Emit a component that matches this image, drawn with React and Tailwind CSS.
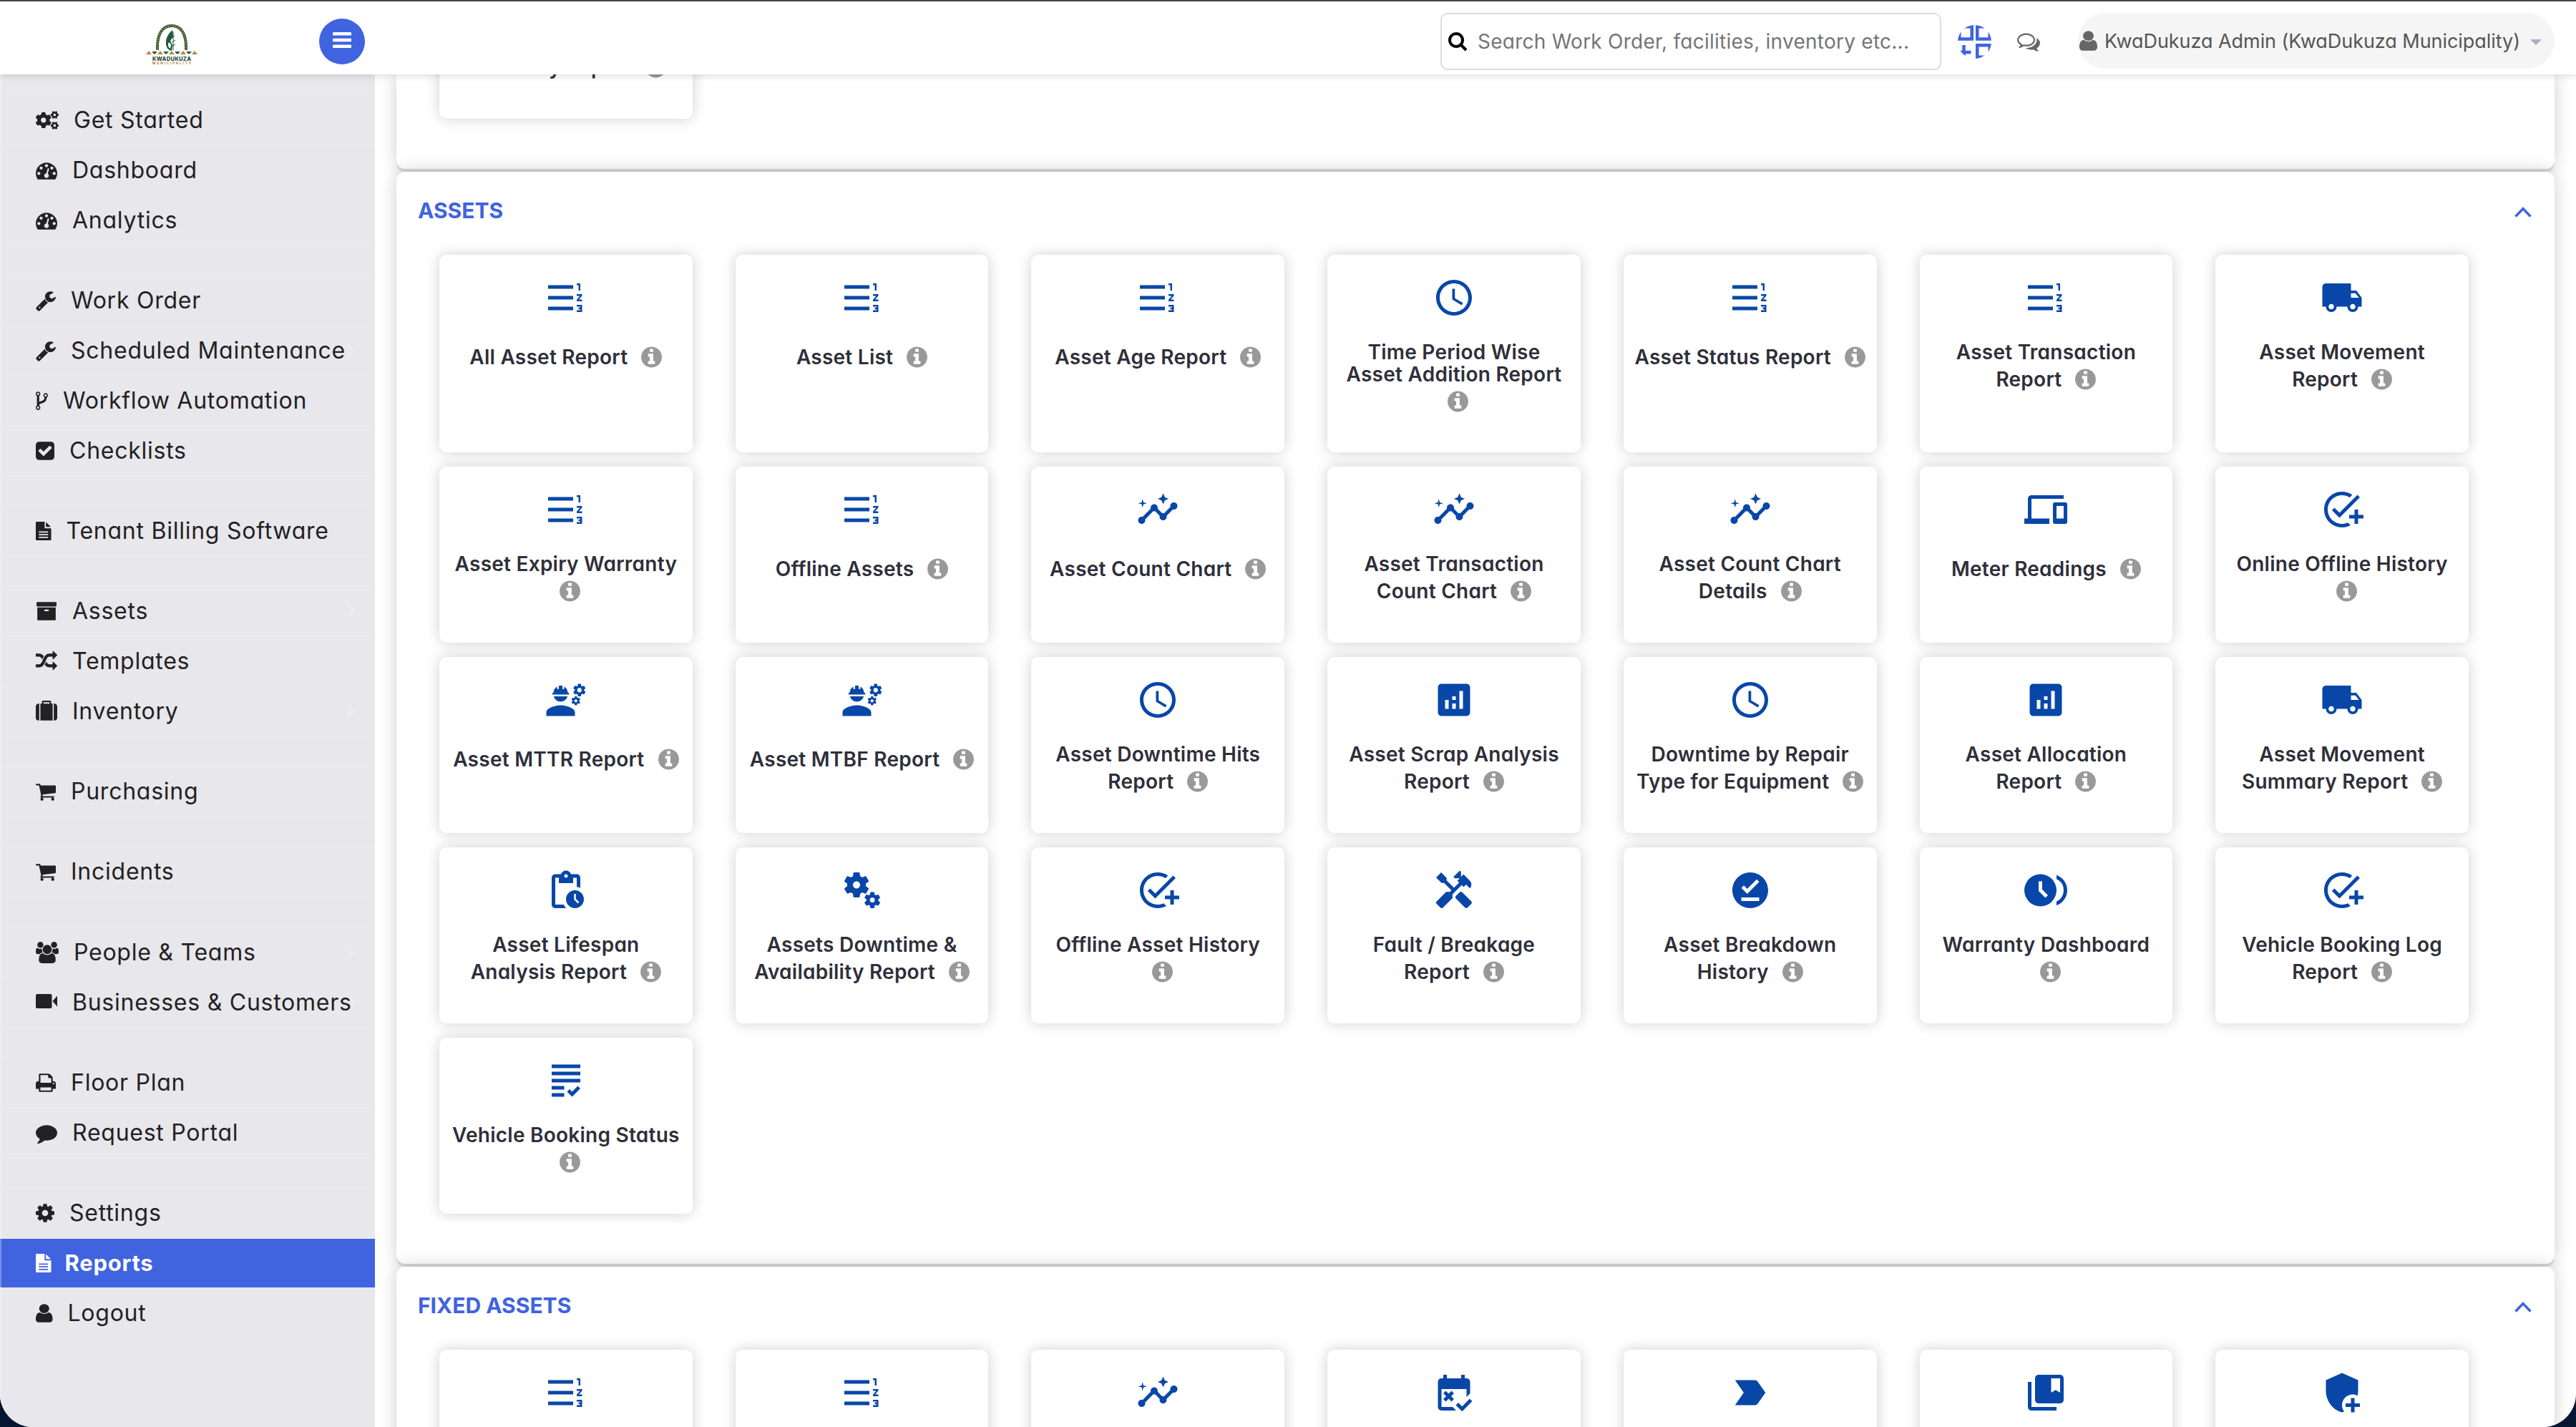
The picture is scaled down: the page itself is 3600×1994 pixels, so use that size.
import { Fragment } from 'react';
import { FaCogs } from 'react-icons/fa';
import {
    MdAccessTime,
    MdAddModerator,
    MdAddTask,
    MdAnalytics,
    MdBrowseGallery,
    MdCollectionsBookmark,
    MdDevices,
    MdEngineering,
    MdFormatListNumberedRtl,
    MdFreeCancellation,
    MdGrading,
    MdHandyman,
    MdInsights,
    MdLabelImportant,
    MdLocalShipping,
    MdMiscellaneousServices,
    MdOfflinePin,
    MdPendingActions,
} from 'react-icons/md';

// glyphs drawn on a 1792 unit grid, adv is the glyph's own width
const GLYPHS = {
    dashboard: { adv: 1792, d: 'M384 1152q0-53-37.5-90.5t-90.5-37.5-90.5 37.5-37.5 90.5 37.5 90.5 90.5 37.5 90.5-37.5 37.5-90.5zm192-448q0-53-37.5-90.5t-90.5-37.5-90.5 37.5-37.5 90.5 37.5 90.5 90.5 37.5 90.5-37.5 37.5-90.5zm428 481l101-382q6-26-7.5-48.5t-38.5-29.5-48 6.5-30 39.5l-101 382q-60 5-107 43.5t-63 98.5q-20 77 20 146t117 89 146-20 89-117q16-60-6-117t-72-91zm660-33q0-53-37.5-90.5t-90.5-37.5-90.5 37.5-37.5 90.5 37.5 90.5 90.5 37.5 90.5-37.5 37.5-90.5zm-640-640q0-53-37.5-90.5t-90.5-37.5-90.5 37.5-37.5 90.5 37.5 90.5 90.5 37.5 90.5-37.5 37.5-90.5zm448 192q0-53-37.5-90.5t-90.5-37.5-90.5 37.5-37.5 90.5 37.5 90.5 90.5 37.5 90.5-37.5 37.5-90.5zm320 448q0 261-141 483-19 29-54 29h-1402q-35 0-54-29-141-221-141-483 0-182 71-348t191-286 286-191 348-71 348 71 286 191 191 286 71 348z' },
    wrench: { adv: 1664, d: 'M448 1472q0-26-19-45t-45-19-45 19-19 45 19 45 45 19 45-19 19-45zm644-420l-682 682q-37 37-90 37-52 0-91-37l-106-108q-38-36-38-90 0-53 38-91l681-681q39 98 114.5 173.5t173.5 114.5zm634-435q0 39-23 106-47 134-164.5 217.5t-258.5 83.5q-185 0-316.5-131.5t-131.5-316.5 131.5-316.5 316.5-131.5q58 0 121.5 16.5t107.5 46.5q16 11 16 28t-16 28l-293 169v224l193 107q5-3 79-48.5t135.5-81 70.5-35.5q15 0 23.5 10t8.5 25z' },
    fork: { adv: 1024, d: 'M672 1472q0-40-28-68t-68-28-68 28-28 68 28 68 68 28 68-28 28-68zm0-1152q0-40-28-68t-68-28-68 28-28 68 28 68 68 28 68-28 28-68zm640 128q0-40-28-68t-68-28-68 28-28 68 28 68 68 28 68-28 28-68zm96 0q0 52-26 96.5t-70 69.5q-2 287-226 414-67 38-203 81-128 40-169.5 71t-41.5 100v26q44 25 70 69.5t26 96.5q0 80-56 136t-136 56-136-56-56-136q0-52 26-96.5t70-69.5v-820q-44-25-70-69.5t-26-96.5q0-80 56-136t136-56 136 56 56 136q0 52-26 96.5t-70 69.5v497q54-26 154-57 55-17 87.5-29.5t70.5-31 59-39.5 40.5-51 28-69.5 8.5-91.5q-44-25-70-69.5t-26-96.5q0-80 56-136t136-56 136 56 56 136z' },
    check: { adv: 1536, d: 'M813 1299l614-614q19-19 19-45t-19-45l-102-102q-19-19-45-19t-45 19l-467 467-211-211q-19-19-45-19t-45 19l-102 102q-19 19-19 45t19 45l358 358q19 19 45 19t45-19zm851-883v960q0 119-84.5 203.5t-203.5 84.5h-960q-119 0-203.5-84.5t-84.5-203.5v-960q0-119 84.5-203.5t203.5-84.5h960q119 0 203.5 84.5t84.5 203.5z' },
    archive: { adv: 1792, d: 'M1088 832q0-26-19-45t-45-19h-256q-26 0-45 19t-19 45 19 45 45 19h256q26 0 45-19t19-45zm576-192v960q0 26-19 45t-45 19h-1408q-26 0-45-19t-19-45v-960q0-26 19-45t45-19h1408q26 0 45 19t19 45zm64-448v256q0 26-19 45t-45 19h-1536q-26 0-45-19t-19-45v-256q0-26 19-45t45-19h1536q26 0 45 19t19 45z' },
    random: { adv: 1792, d: 'M666 481q-60 92-137 273-22-45-37-72.5t-40.5-63.5-51-56.5-63-35-81.5-14.5h-224q-14 0-23-9t-9-23v-192q0-14 9-23t23-9h224q250 0 410 225zm1126 799q0 14-9 23l-320 320q-9 9-23 9-13 0-22.5-9.5t-9.5-22.5v-192q-32 0-85 .5t-81 1-73-1-71-5-64-10.5-63-18.5-58-28.5-59-40-55-53.5-56-69.5q59-93 136-273 22 45 37 72.5t40.5 63.5 51 56.5 63 35 81.5 14.5h256v-192q0-14 9-23t23-9q12 0 24 10l319 319q9 9 9 23zm0-896q0 14-9 23l-320 320q-9 9-23 9-13 0-22.5-9.5t-9.5-22.5v-192h-256q-48 0-87 15t-69 45-51 61.5-45 77.5q-32 62-78 171-29 66-49.5 111t-54 105-64 100-74 83-90 68.5-106.5 42-128 16.5h-224q-14 0-23-9t-9-23v-192q0-14 9-23t23-9h224q48 0 87-15t69-45 51-61.5 45-77.5q32-62 78-171 29-66 49.5-111t54-105 64-100 74-83 90-68.5 106.5-42 128-16.5h256v-192q0-14 9-23t23-9q12 0 24 10l319 319q9 9 9 23z' },
    suitcase: { adv: 1792, d: 'M640 256h512v-128h-512v128zm-352 0v1408h-64q-92 0-158-66t-66-158v-960q0-92 66-158t158-66h64zm1120 0v1408h-1024v-1408h128v-160q0-40 28-68t68-28h576q40 0 68 28t28 68v160h128zm384 224v960q0 92-66 158t-158 66h-64v-1408h64q92 0 158 66t66 158z' },
    cart: { adv: 1664, d: 'M704 1536q0 52-38 90t-90 38-90-38-38-90 38-90 90-38 90 38 38 90zm896 0q0 52-38 90t-90 38-90-38-38-90 38-90 90-38 90 38 38 90zm128-1088v512q0 24-16.5 42.5t-40.5 21.5l-1044 122q13 60 13 70 0 16-24 64h920q26 0 45 19t19 45-19 45-45 19h-1024q-26 0-45-19t-19-45q0-11 8-31.5t16-36 21.5-40 15.5-29.5l-177-823h-204q-26 0-45-19t-19-45 19-45 45-19h256q16 0 28.5 6.5t19.5 15.5 13 24.5 8 26 5.5 29.5 4.5 26h1201q26 0 45 19t19 45z' },
    users: { adv: 1920, d: 'M529 896q-162 5-265 128h-134q-82 0-138-40.5t-56-118.5q0-353 124-353 6 0 43.5 21t97.5 42.5 119 21.5q67 0 133-23-5 37-5 66 0 139 81 256zm1071 637q0 120-73 189.5t-194 69.5h-874q-121 0-194-69.5t-73-189.5q0-53 3.5-103.5t14-109 26.5-108.5 43-97.5 62-81 85.5-53.5 111.5-20q10 0 43 21.5t73 48 107 48 135 21.5 135-21.5 107-48 73-48 43-21.5q61 0 111.5 20t85.5 53.5 62 81 43 97.5 26.5 108.5 14 109 3.5 103.5zm-1024-1277q0 106-75 181t-181 75-181-75-75-181 75-181 181-75 181 75 75 181zm704 384q0 159-112.5 271.5t-271.5 112.5-271.5-112.5-112.5-271.5 112.5-271.5 271.5-112.5 271.5 112.5 112.5 271.5zm576 225q0 78-56 118.5t-138 40.5h-134q-103-123-265-128 81-117 81-256 0-29-5-66 66 23 133 23 59 0 119-21.5t97.5-42.5 43.5-21q124 0 124 353zm-128-609q0 106-75 181t-181 75-181-75-75-181 75-181 181-75 181 75 75 181z' },
    print: { adv: 1664, d: 'M448 1536h896v-256h-896v256zm0-640h896v-384h-160q-40 0-68-28t-28-68v-160h-640v640zm1152 64q0-26-19-45t-45-19-45 19-19 45 19 45 45 19 45-19 19-45zm128 0v416q0 13-9.5 22.5t-22.5 9.5h-224v160q0 40-28 68t-68 28h-960q-40 0-68-28t-28-68v-160h-224q-13 0-22.5-9.5t-9.5-22.5v-416q0-79 56.5-135.5t135.5-56.5h64v-544q0-40 28-68t68-28h672q40 0 88 20t76 48l152 152q28 28 48 76t20 88v256h64q79 0 135.5 56.5t56.5 135.5z' },
    comment: { adv: 1792, d: 'M1792 896q0 174-120 321.5t-326 233-450 85.5q-70 0-145-8-198 175-460 242-49 14-114 22-17 2-30.5-9t-17.5-29v-1q-3-4-.5-12t2-10 4.5-9.5l6-9 7-8.5 8-9q7-8 31-34.5t34.5-38 31-39.5 32.5-51 27-59 26-76q-157-89-247.5-220t-90.5-281q0-130 71-248.5t191-204.5 286-136.5 348-50.5q244 0 450 85.5t326 233 120 321.5z' },
    cog: { adv: 1536, d: 'M1152 896q0-106-75-181t-181-75-181 75-75 181 75 181 181 75 181-75 75-181zm512-109v222q0 12-8 23t-20 13l-185 28q-19 54-39 91 35 50 107 138 10 12 10 25t-9 23q-27 37-99 108t-94 71q-12 0-26-9l-138-108q-44 23-91 38-16 136-29 186-7 28-36 28h-222q-14 0-24.5-8.5t-11.5-21.5l-28-184q-49-16-90-37l-141 107q-10 9-25 9-14 0-25-11-126-114-165-168-7-10-7-23 0-12 8-23 15-21 51-66.5t54-70.5q-27-50-41-99l-183-27q-13-2-21-12.5t-8-23.5v-222q0-12 8-23t19-13l186-28q14-46 39-92-40-57-107-138-10-12-10-24 0-10 9-23 26-36 98.5-107.5t94.5-71.5q13 0 26 10l138 107q44-23 91-38 16-136 29-186 7-28 36-28h222q14 0 24.5 8.5t11.5 21.5l28 184q49 16 90 37l142-107q9-9 24-9 13 0 25 10 129 119 165 170 7 8 7 22 0 12-8 23-15 21-51 66.5t-54 70.5q26 50 41 98l183 28q13 2 21 12.5t8 23.5z' },
    user: { adv: 1280, d: 'M1536 1399q0 109-62.5 187t-150.5 78h-854q-88 0-150.5-78t-62.5-187q0-85 8.5-160.5t31.5-152 58.5-131 94-89 134.5-34.5q131 128 313 128t313-128q76 0 134.5 34.5t94 89 58.5 131 31.5 152 8.5 160.5zm-256-887q0 159-112.5 271.5t-271.5 112.5-271.5-112.5-112.5-271.5 112.5-271.5 271.5-112.5 271.5 112.5 112.5 271.5z' },
    info: { adv: 1536, d: 'M1152 1376v-160q0-14-9-23t-23-9h-96v-512q0-14-9-23t-23-9h-320q-14 0-23 9t-9 23v160q0 14 9 23t23 9h96v320h-96q-14 0-23 9t-9 23v160q0 14 9 23t23 9h448q14 0 23-9t9-23zm-128-896v-160q0-14-9-23t-23-9h-192q-14 0-23 9t-9 23v160q0 14 9 23t23 9h192q14 0 23-9t9-23zm640 416q0 209-103 385.5t-279.5 279.5-385.5 103-385.5-103-279.5-279.5-103-385.5 103-385.5 279.5-279.5 385.5-103 385.5 103 279.5 279.5 103 385.5z' },
    comments: { adv: 1792, d: 'M704 384q-153 0-286 52t-211.5 141-78.5 191q0 82 53 158t149 132l97 56-35 84q34-20 62-39l44-31 53 10q78 14 153 14 153 0 286-52t211.5-141 78.5-191-78.5-191-211.5-141-286-52zm0-128q191 0 353.5 68.5t256.5 186.5 94 257-94 257-256.5 186.5-353.5 68.5q-86 0-176-16-124 88-278 128-36 9-86 16h-3q-11 0-20.5-8t-11.5-21q-1-3-1-6.5t.5-6.5 2-6l2.5-5 3.5-5.5 4-5 4.5-5 4-4.5q5-6 23-25t26-29.5 22.5-29 25-38.5 20.5-44q-124-72-195-177t-71-224q0-139 94-257t256.5-186.5 353.5-68.5zm822 1169q10 24 20.5 44t25 38.5 22.5 29 26 29.5 23 25q1 1 4 4.5t4.5 5 4 5 3.5 5.5l2.5 5 2 6 .5 6.5-1 6.5q-3 14-13 22t-22 7q-50-7-86-16-154-40-278-128-90 16-176 16-271 0-472-132 58 4 88 4 161 0 309-45t264-129q125-92 192-212t67-254q0-77-23-152 129 71 204 178t75 230q0 120-71 224.5t-195 176.5z' },
};

function Glyph({ name, className }) {
    const { adv, d } = GLYPHS[name];
    return (
        <svg className={className} viewBox={`${(1792 - adv) / 2} 0 ${adv} 1792`} preserveAspectRatio="none" fill="currentColor">
            <path d={d} />
        </svg>
    );
}

function FileIcon() {
    return (
        <svg className="w-[21.5px] h-[26px]" viewBox="0 0 1280 1536" fill="currentColor">
            <path fillRule="evenodd" d="M1244 428q-8-16-22-30L882 58q-14-14-34-24v394zM736 0H72Q0 0 0 72v1392q0 72 72 72h1136q72 0 72-72V544H800q-64 0-64-64zM256 896h768v-96H256zm0 224h768v-96H256zm0 224h768v-96H256z" />
        </svg>
    );
}

function VideoIcon() {
    return (
        <svg className="w-[30px] h-[20px] mb-1" viewBox="0 0 30 20" fill="currentColor">
            <rect width="22.5" height="20" rx="2" />
            <path d="M23.5 10 30 2.5v15z" />
        </svg>
    );
}

const MENU = [
    [
        { label: 'Get Started', icon: <FaCogs className="w-8 h-[26px]" /> },
        { label: 'Dashboard', icon: <Glyph name="dashboard" className="w-[30px] h-[30px]" /> },
        { label: 'Analytics', icon: <Glyph name="dashboard" className="w-[30px] h-[30px]" /> },
    ],
    [
        { label: 'Work Order', icon: <Glyph name="wrench" className="w-7 h-[30px]" /> },
        { label: 'Scheduled Maintenance', icon: <Glyph name="wrench" className="w-7 h-[30px]" />, sub: true },
        { label: 'Workflow Automation', icon: <Glyph name="fork" className="w-[17px] h-[30px]" /> },
        { label: 'Checklists', icon: <Glyph name="check" className="w-[26px] h-[30px]" /> },
    ],
    [{ label: 'Tenant Billing Software', icon: <FileIcon /> }],
    [
        { label: 'Assets', icon: <Glyph name="archive" className="w-[30px] h-[30px]" />, sub: true },
        { label: 'Templates', icon: <Glyph name="random" className="w-[30px] h-[30px]" /> },
        { label: 'Inventory', icon: <Glyph name="suitcase" className="w-[30px] h-[30px]" />, sub: true },
    ],
    [{ label: 'Purchasing', icon: <Glyph name="cart" className="w-7 h-[30px]" /> }],
    [{ label: 'Incidents', icon: <Glyph name="cart" className="w-7 h-[30px]" /> }],
    [
        { label: 'People & Teams', icon: <Glyph name="users" className="w-8 h-[30px]" />, sub: true },
        { label: 'Businesses & Customers', icon: <VideoIcon />, sub: true },
    ],
    [
        { label: 'Floor Plan', icon: <Glyph name="print" className="w-7 h-[30px]" /> },
        { label: 'Request Portal', icon: <Glyph name="comment" className="w-[30px] h-[30px]" /> },
    ],
    [
        { label: 'Settings', icon: <Glyph name="cog" className="w-[26px] h-[30px]" /> },
        { label: 'Reports', icon: <FileIcon />, active: true },
        { label: 'Logout', icon: <Glyph name="user" className="w-[23.5px] h-[30px]" /> },
    ],
];

// the info badge sits on the last line; an empty string puts it on its own
const ASSETS = [
    [MdFormatListNumberedRtl, ['All Asset Report']],
    [MdFormatListNumberedRtl, ['Asset List']],
    [MdFormatListNumberedRtl, ['Asset Age Report']],
    [MdAccessTime, ['Time Period Wise', 'Asset Addition Report', '']],
    [MdFormatListNumberedRtl, ['Asset Status Report']],
    [MdFormatListNumberedRtl, ['Asset Transaction', 'Report']],
    [MdLocalShipping, ['Asset Movement', 'Report']],
    [MdFormatListNumberedRtl, ['Asset Expiry Warranty', '']],
    [MdFormatListNumberedRtl, ['Offline Assets']],
    [MdInsights, ['Asset Count Chart']],
    [MdInsights, ['Asset Transaction', 'Count Chart']],
    [MdInsights, ['Asset Count Chart', 'Details']],
    [MdDevices, ['Meter Readings']],
    [MdAddTask, ['Online Offline History', '']],
    [MdEngineering, ['Asset MTTR Report']],
    [MdEngineering, ['Asset MTBF Report']],
    [MdAccessTime, ['Asset Downtime Hits', 'Report']],
    [MdAnalytics, ['Asset Scrap Analysis', 'Report']],
    [MdAccessTime, ['Downtime by Repair', 'Type for Equipment']],
    [MdAnalytics, ['Asset Allocation', 'Report']],
    [MdLocalShipping, ['Asset Movement', 'Summary Report']],
    [MdPendingActions, ['Asset Lifespan', 'Analysis Report']],
    [MdMiscellaneousServices, ['Assets Downtime &', 'Availability Report']],
    [MdAddTask, ['Offline Asset History', '']],
    [MdHandyman, ['Fault / Breakage', 'Report']],
    [MdOfflinePin, ['Asset Breakdown', 'History']],
    [MdBrowseGallery, ['Warranty Dashboard', '']],
    [MdAddTask, ['Vehicle Booking Log', 'Report']],
    [MdGrading, ['Vehicle Booking Status', '']],
];

const FIXED_ASSETS = [
    MdFormatListNumberedRtl,
    MdFormatListNumberedRtl,
    MdInsights,
    MdFreeCancellation,
    MdLabelImportant,
    MdCollectionsBookmark,
    MdAddModerator,
].map((Icon) => [Icon, null]);

function ReportCard({ icon: Icon, lines }) {
    return (
        <div className="flex flex-col items-center min-h-[246px] pt-[30px] pb-[50px] rounded-[10px] bg-white shadow-[0_0_20px_rgba(0,0,0,0.19)]">
            <Icon className="w-[60px] h-[60px] shrink-0 text-[#0847a8]" />
            {lines && (
                <div className="mt-[31px] font-semibold text-[28px] text-[#2f2f3a] tracking-[0.25px] whitespace-nowrap">
                    {lines.map((line, i) =>
                        i === lines.length - 1 ? (
                            <div key={i} className="flex items-center justify-center h-[43px]">
                                {line && <span className="mr-[7px]">{line}</span>}
                                <Glyph name="info" className="w-[29px] h-[34px] ml-3 text-[#999999]" />
                            </div>
                        ) : (
                            <div key={i} className="h-[31px] text-center leading-[31px]">{line}</div>
                        )
                    )}
                </div>
            )}
        </div>
    );
}

function Panel({ title, reports, className }) {
    return (
        <section className={`rounded-xl bg-white shadow-[0_4px_0_#d8d8d8,0_0_24px_rgba(0,0,0,0.2)] ${className}`}>
            <div className="flex items-center justify-between h-[116px] pl-[30px] pr-8 pb-2">
                <h2 className="font-bold text-[30px] leading-none text-[#4063e0]">{title}</h2>
                <svg className="w-6 h-4 mt-1" viewBox="0 0 24 16" fill="none" stroke="#4063e0" strokeWidth="3.5">
                    <path d="M1.500 14.500 12 3.500l10.500 11" />
                </svg>
            </div>
            <div className="grid grid-cols-7 gap-x-[60px] gap-y-5 pl-[60px] pr-[120px]">
                {reports.map(([icon, lines], i) => (
                    <ReportCard key={i} icon={icon} lines={lines} />
                ))}
            </div>
        </section>
    );
}

function Logo() {
    return (
        <svg className="w-[72px] h-[56px] overflow-visible" viewBox="0 0 72 56">
            <path d="M16 36C15 12 24 2 36 2s21 10 20 34" fill="none" stroke="#1f5a3c" strokeWidth="4" />
            <path d="M16 36C15 12 24 2 36 2s21 10 20 34" fill="none" stroke="#b07a3c" strokeWidth="2.4" strokeDasharray="2 1.5" />
            <path d="M37 8c-6 5-10 12-9 20 1 5 3 8 8 9l1-8-3-6 4-6z" fill="#1f5a3c" />
            <path d="M38 10v26M40 16l-3 3M41 22l-4 3M41 28l-4 2" stroke="#1f5a3c" strokeWidth="1" />
            <path d="M32 25c-2 3-1 7 2 9l1-6z" fill="#ffffff" />
            <path d="M0 42l4-5 4 5zM16 42l4-5 4 5zM32 42l4-5 4 5zM48 42l4-5 4 5zM64 42l4-5 4 5z" fill="#b98645" />
            <path d="M8 38l4 4 4-4zM24 38l4 4 4-4zM40 38l4 4 4-4zM56 38l4 4 4-4z" fill="#1f5a3c" />
            <text x="36" y="50.5" textAnchor="middle" textLength="54" fontSize="7.5" fontWeight="800" fill="#1f4a35" fontFamily="Inter, sans-serif">KWADUKUZA</text>
            <text x="36" y="56" textAnchor="middle" textLength="54" fontSize="4.5" fontWeight="700" fill="#b07a3c" fontFamily="Inter, sans-serif">MUNICIPALITY</text>
        </svg>
    );
}

function AppsIcon() {
    return (
        <svg className="w-[47px] h-[47px]" viewBox="0 0 47 47" fill="none" stroke="#4063e0" strokeWidth="4.5">
            <clipPath id="apps-round">
                <circle cx="23.5" cy="23.5" r="23.5" />
            </clipPath>
            <g clipPath="url(#apps-round)">
                <rect x="2.25" y="2.25" width="17.5" height="17.25" />
                <rect x="27.25" y="2.25" width="17.5" height="17.25" />
                <rect x="27.25" y="28.25" width="17.5" height="16.5" />
                <path d="M0 38h18.500M8.500 28v19" />
            </g>
        </svg>
    );
}

function Header() {
    return (
        <header className="relative z-10 flex items-center h-[104px] pt-2.5 pr-[30px] border-t-2 border-[#474546] bg-white shadow-[0_2px_10px_rgba(0,0,0,0.14)]">
            <div className="flex items-center w-[524px] pl-[204px]">
                <div className="mt-2"><Logo /></div>
                <button className="flex items-center justify-center w-16 h-16 ml-[170px] pb-1 rounded-full bg-[#4063e0]">
                    <svg className="w-[26px] h-[22px]" viewBox="0 0 26 22" fill="#ffffff">
                        <rect width="26" height="4.5" rx="1" />
                        <rect y="8.75" width="26" height="4.5" rx="1" />
                        <rect y="17.5" width="26" height="4.5" rx="1" />
                    </svg>
                </button>
            </div>
            <div className="flex items-center ml-auto w-[700px] h-20 pl-2 rounded-[10px] border-2 border-[#dddddd] text-[#757575]">
                <svg className="w-7 h-7" viewBox="0 0 28 28" fill="none" stroke="#000000" strokeWidth="4">
                    <circle cx="12" cy="12" r="9" />
                    <path d="M18.500 18.500 26 26" />
                </svg>
                <span className="ml-3.5 text-[28px] tracking-[0.25px] whitespace-nowrap">Search Work Order, facilities, inventory etc...</span>
            </div>
            <div className="ml-[23px]"><AppsIcon /></div>
            <Glyph name="comments" className="w-8 h-8 ml-9 text-[#666666]" />
            <div className="flex items-center w-[666px] h-[78px] ml-[53px] -mt-0.5 pl-0.5 rounded-[39px] bg-[#f5f5f5] text-[#555555]">
                <Glyph name="user" className="w-[25px] h-8 text-[#666666]" />
                <span className="ml-2.5 mt-0.5 text-[27px] tracking-[-0.05px] whitespace-nowrap">KwaDukuza Admin (KwaDukuza Municipality)</span>
                <svg className="w-4 h-2 ml-auto mr-[18px] mt-1" viewBox="0 0 16 8" fill="#a8adc0">
                    <path d="M0 0h16L8 8z" />
                </svg>
            </div>
        </header>
    );
}

function Sidebar() {
    return (
        <aside className="relative w-[524px] shrink-0 pt-7 bg-[#e8e7ec] text-[#222222]">
            {MENU.map((group, g) => (
                <Fragment key={g}>
                    {g > 0 && <div className={g === 6 ? 'h-[43px] border-t-2 border-[#ebeaee]' : 'h-[42px] border-t-2 border-[#ebeaee]'} />}
                    {group.map((item) => (
                        <a
                            key={item.label}
                            className={`relative flex items-center h-[70px] pl-[50px] border-t-2 border-[#ebeaee] tracking-[0.75px] ${item.active ? 'bg-[#4063e0] bg-clip-padding text-white font-bold text-[31px]' : 'text-[32px]'}`}
                        >
                            {item.sub && (
                                <svg className="absolute right-[28px] top-6 w-3 h-5" viewBox="0 0 12 20" fill="none" stroke="#efeff2" strokeWidth="2">
                                    <path d="M1 1l9 9-9 9" />
                                </svg>
                            )}
                            {item.icon}
                            <span className={item.active ? 'relative ml-[19px] whitespace-nowrap' : 'relative ml-[21px] whitespace-nowrap'}>{item.label}</span>
                        </a>
                    ))}
                </Fragment>
            ))}
            <div className="absolute inset-y-0 left-0 w-0.5 bg-white/30" />
        </aside>
    );
}

export default function App() {
    return (
        <div className="h-[1994px] bg-[#071630]">
            <div className="flex flex-col h-full overflow-hidden rounded-b-[46px] bg-white font-['Inter',sans-serif] [font-feature-settings:'cv11']">
                <Header />
                <div className="flex flex-1 min-h-0">
                    <Sidebar />
                    <main className="flex-1 min-w-0 overflow-hidden px-[30px]">
                        <section className="flex flex-col justify-end h-[132px] mb-1 pb-[70px] pl-[60px] pr-[120px] rounded-b-xl bg-white shadow-[0_4px_0_#d8d8d8,0_0_24px_rgba(0,0,0,0.2)]">
                            <div className="grid grid-cols-7 gap-x-[60px]">
                                <ReportCard icon={MdGrading} lines={['', 'Summary Report']} />
                            </div>
                        </section>
                        <Panel title="ASSETS" reports={ASSETS} className="h-[1526px] mb-1" />
                        <Panel title="FIXED ASSETS" reports={FIXED_ASSETS} className="h-[400px]" />
                    </main>
                </div>
            </div>
        </div>
    );
}
